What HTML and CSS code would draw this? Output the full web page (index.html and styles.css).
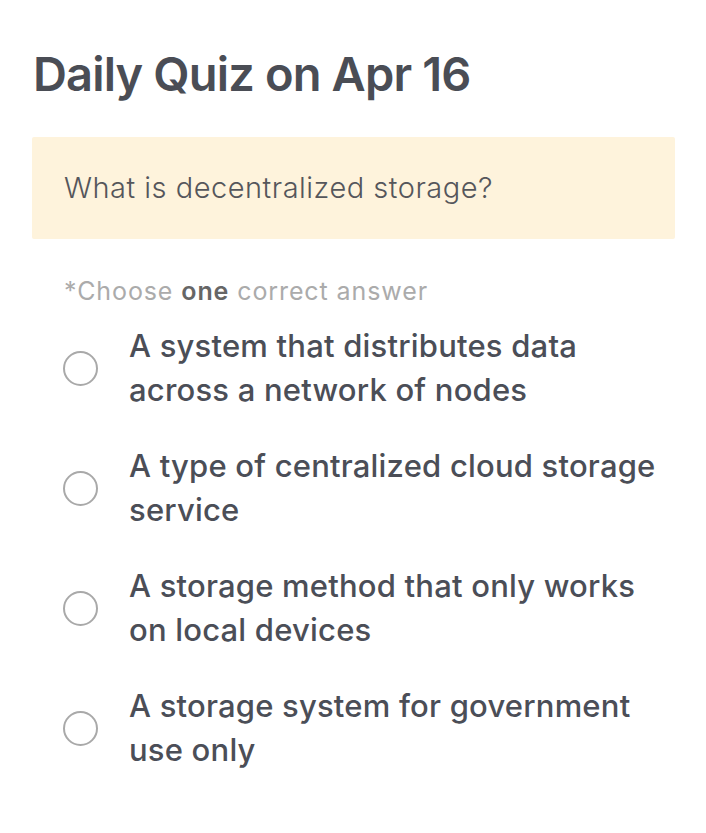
FILE: index.html
```html
<!DOCTYPE html>
<html lang="en">
<head>
    <meta charset="UTF-8">
    <meta name="viewport" content="width=device-width, initial-scale=1.0">
    <title>Daily Quiz</title>
    <link rel="stylesheet" href="styles.css">
</head>
<body>

<div class="quiz">
    <h1 class="quiz-title">Daily Quiz on Apr 16</h1>

    <div class="question">
        <p>What is decentralized storage?</p>
    </div>

    <p class="hint">*Choose <b>one</b> correct answer</p>

    <div class="options">
        <label class="option">
            <span class="radio"></span>
            <span class="option-text">A system that distributes data across a network of nodes</span>
        </label>
        <label class="option">
            <span class="radio"></span>
            <span class="option-text">A type of centralized cloud storage service</span>
        </label>
        <label class="option">
            <span class="radio"></span>
            <span class="option-text">A storage method that only works on local devices</span>
        </label>
        <label class="option">
            <span class="radio"></span>
            <span class="option-text">A storage system for government use only</span>
        </label>
    </div>
</div>

</body>
</html>
```

FILE: styles.css
```css
body {
    margin: 0;
    background-color: #ffffff;
    font-family: 'Inter', 'Noto Sans', sans-serif;
}

.quiz {
    padding: 46px 31px 40px 32px;
}

.quiz-title {
    margin: 0 0 35px 1px;
    font-size: 47px;
    font-weight: 600;
    line-height: 56px;
    color: #4a4d55;
    letter-spacing: -0.85px;
}

/* caixa amarela da pergunta */
.question {
    background-color: #fef3dc;
    border-radius: 2px;
    padding: 34px 32px;
}

.question p {
    margin: 0;
    font-size: 29px;
    font-weight: 300;
    line-height: 34px;
    color: #55565b;
    letter-spacing: 0.5px;
}

.hint {
    margin: 37px 0 18px 32px;
    font-size: 25px;
    line-height: 30px;
    color: #ababab;
    letter-spacing: 0.9px;
}

.hint b {
    font-weight: 600;
    color: #666;
}

.options {
    display: flex;
    flex-direction: column;
    gap: 32px;
}

.option {
    display: flex;
    align-items: center;
    gap: 31px;
    padding-left: 31px;
}

.radio {
    flex: none;
    width: 31px;
    height: 31px;
    border: 2.5px solid #a9a9a9;
    border-radius: 50%;
}

.option-text {
    max-width: 530px;
    font-size: 31px;
    font-weight: 500;
    line-height: 44px;
    color: #4b4e57;
    letter-spacing: 0.2px;
}
```
